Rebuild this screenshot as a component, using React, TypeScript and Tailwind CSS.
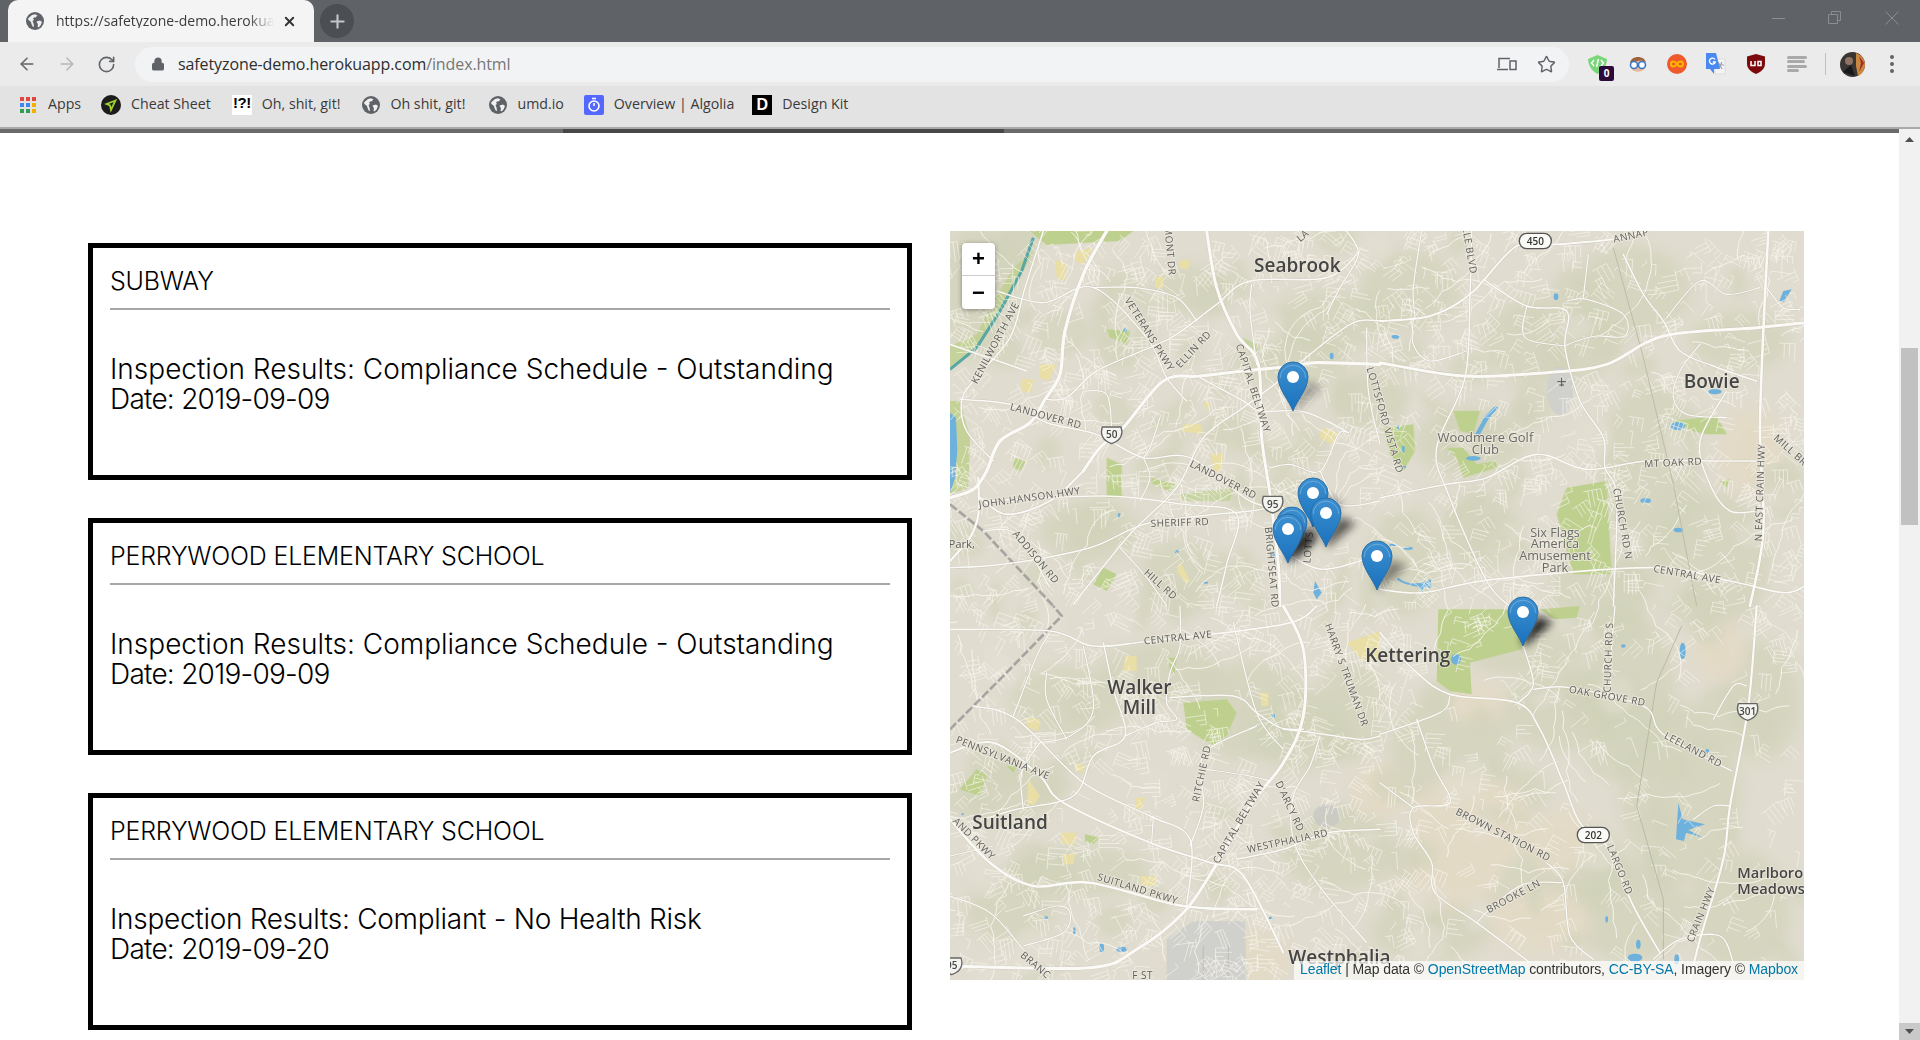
import React from 'react';
import { ArrowLeft, ArrowRight, RotateCw, Lock, Star, X, Plus } from 'lucide-react';

// map is drawn from four traced quadrants, coords are 3x crop coords
const QUADS: [number, number][] = [[0, 0], [430, 0], [0, 375], [430, 375]];

type Road = { q: number; w: number; p: number[] };

const ROADS: Road[] = [
  // top left
  { q: 0, w: 1.5, p: [0, 340, 130, 385, 230, 420] },
  { q: 0, w: 1.5, p: [280, 0, 225, 170, 180, 320, 70, 450, 35, 510, 50, 600, 130, 690] },
  { q: 0, w: 1.4, p: [140, 180, 280, 215, 430, 170, 590, 320, 650, 440, 710, 510] },
  { q: 0, w: 1.4, p: [430, 170, 560, 170, 680, 200, 740, 270] },
  { q: 0, w: 1.5, p: [1230, 60, 1130, 140, 900, 150, 800, 220, 680, 310, 600, 350, 440, 420, 350, 500, 290, 505] },
  { q: 0, w: 1.5, p: [1290, 270, 1210, 275, 1080, 370, 1000, 440, 880, 530, 760, 620, 680, 770, 540, 910, 370, 1120] },
  { q: 0, w: 1.5, p: [750, 440, 880, 510, 930, 540, 1050, 540, 1130, 570, 1195, 605] },
  { q: 0, w: 1.3, p: [1195, 605, 1165, 610, 1110, 720, 1020, 700, 960, 710] },
  { q: 0, w: 1.3, p: [1110, 720, 1170, 820, 1290, 810] },
  { q: 0, w: 1.5, p: [0, 1010, 160, 1000, 420, 950, 600, 875, 900, 840, 950, 830] },
  { q: 0, w: 1.3, p: [100, 900, 200, 910, 300, 1070] },
  { q: 0, w: 1.3, p: [920, 400, 900, 240, 905, 160] },
  { q: 0, w: 1.3, p: [1130, 250, 1170, 170, 1225, 70, 1190, 0] },
  { q: 0, w: 1.5, p: [100, 810, 460, 795, 700, 820, 860, 850, 830, 1000, 800, 1125] },
  { q: 0, w: 1.3, p: [1250, 290, 1255, 480, 1290, 640] },
  { q: 0, w: 1.5, p: [1000, 960, 1120, 1015, 1290, 970] },
  { q: 0, w: 1.2, p: [580, 680, 600, 740, 570, 810] },
  { q: 0, w: 1.2, p: [630, 560, 600, 650, 580, 680] },
  { q: 0, w: 1.2, p: [400, 480, 470, 490, 485, 590] },
  { q: 0, w: 1.2, p: [510, 950, 590, 1040, 650, 1125] },
  { q: 0, w: 1.5, p: [30, 505, 180, 520, 290, 575, 440, 610, 580, 680, 720, 680, 900, 810, 1000, 830] },
  { q: 0, w: 3.4, p: [470, 0, 400, 130, 345, 300, 330, 430, 285, 505, 240, 575, 150, 630, 110, 720, 70, 775, 0, 800] },
  { q: 0, w: 2, p: [400, 720, 300, 810, 170, 850, 90, 800] },
  { q: 0, w: 2.2, p: [85, 740, 85, 850, 60, 920, 0, 990] },
  { q: 0, w: 3.2, p: [1290, 400, 1100, 395, 1030, 405, 880, 420, 750, 435, 640, 450, 520, 590, 450, 650, 400, 720] },
  { q: 0, w: 3, p: [770, 0, 800, 170, 860, 310, 925, 400, 935, 620, 960, 790, 985, 1000, 990, 1125] },
  // top right
  { q: 1, w: 2, p: [0, 270, 150, 255, 270, 190, 410, 45, 530, 40, 700, 25, 800, 0] },
  { q: 1, w: 1.5, p: [275, 0, 270, 190, 255, 440, 170, 650, 205, 790, 320, 1050, 390, 1125] },
  { q: 1, w: 1.5, p: [310, 145, 440, 225, 560, 240, 555, 350, 600, 510, 670, 620, 675, 710, 710, 800, 700, 1125] },
  { q: 1, w: 1.6, p: [0, 800, 200, 760, 320, 740, 470, 670, 620, 715, 800, 690, 1020, 690, 1130, 690] },
  { q: 1, w: 1.5, p: [730, 70, 790, 190, 850, 270, 900, 360, 1000, 405, 1130, 450] },
  { q: 1, w: 1.7, p: [0, 1075, 130, 1085, 340, 1045, 820, 1010, 1050, 1050, 1210, 1085, 1275, 1065] },
  { q: 1, w: 1.5, p: [1040, 480, 960, 630, 990, 760, 1050, 840, 1130, 840] },
  { q: 1, w: 1.2, p: [560, 210, 620, 205, 730, 250, 735, 315, 650, 315, 590, 330, 555, 345] },
  { q: 1, w: 1.2, p: [440, 225, 435, 320, 555, 345] },
  { q: 1, w: 1.2, p: [100, 260, 100, 340, 150, 390, 260, 360] },
  { q: 1, w: 1.2, p: [860, 260, 960, 150, 1040, 190, 1140, 170] },
  { q: 1, w: 1.2, p: [960, 340, 900, 420, 880, 500, 920, 550, 1040, 560] },
  { q: 1, w: 1.2, p: [125, 0, 100, 170, 105, 260] },
  { q: 1, w: 1.2, p: [625, 70, 610, 200] },
  { q: 1, w: 1.2, p: [1160, 170, 1210, 230, 1260, 235] },
  { q: 1, w: 3, p: [0, 395, 250, 435, 500, 425, 680, 400, 850, 315, 1130, 290, 1275, 275] },
  { q: 1, w: 2.6, p: [1165, 0, 1150, 300, 1140, 600, 1150, 900, 1110, 1125] },
  // bottom left
  { q: 2, w: 1.7, p: [0, 70, 300, 75, 430, 120, 600, 105, 1000, 55, 1100, 0] },
  { q: 2, w: 1.5, p: [1000, 370, 1090, 380, 1230, 400, 1290, 390] },
  { q: 2, w: 1.5, p: [660, 275, 850, 270, 920, 320, 990, 365, 1060, 370] },
  { q: 2, w: 1.3, p: [850, 50, 920, 320, 1000, 430] },
  { q: 2, w: 1.5, p: [460, 110, 490, 250, 525, 390, 430, 450, 370, 570, 200, 610, 100, 640] },
  { q: 2, w: 1.5, p: [70, 300, 200, 340, 400, 530, 600, 630, 720, 700, 710, 900] },
  { q: 2, w: 1.4, p: [920, 360, 790, 420, 750, 480, 760, 600, 720, 720] },
  { q: 2, w: 1.2, p: [770, 490, 900, 510, 960, 525] },
  { q: 2, w: 1.3, p: [690, 0, 690, 120, 660, 200, 650, 290, 680, 340, 620, 350, 525, 390] },
  { q: 2, w: 1.5, p: [860, 760, 1000, 730, 1130, 680, 1290, 670] },
  { q: 2, w: 1.3, p: [1110, 390, 1080, 480, 1030, 570, 1030, 700, 1100, 830, 1250, 1010] },
  { q: 2, w: 1.3, p: [270, 410, 215, 500, 220, 610] },
  { q: 2, w: 1.2, p: [300, 80, 260, 150, 190, 330] },
  { q: 2, w: 1.2, p: [400, 120, 430, 310, 360, 390, 270, 410] },
  { q: 2, w: 1.2, p: [0, 870, 120, 920, 220, 1030, 300, 1125] },
  { q: 2, w: 1.2, p: [290, 200, 290, 280, 350, 400] },
  { q: 2, w: 1.2, p: [220, 930, 320, 900, 360, 920, 340, 980, 220, 1020] },
  { q: 2, w: 1.2, p: [0, 750, 130, 720] },
  { q: 2, w: 1.2, p: [610, 630, 605, 710] },
  { q: 2, w: 2, p: [0, 440, 130, 410, 270, 510, 340, 590, 600, 710, 780, 770, 880, 810, 1000, 1040] },
  { q: 2, w: 2.6, p: [0, 640, 120, 770, 250, 840, 420, 830, 700, 900, 920, 910] },
  { q: 2, w: 3, p: [1000, 0, 1060, 130, 1060, 330, 1000, 470, 900, 600, 790, 790, 700, 920, 560, 1030, 420, 1085, 0, 1080] },
  // bottom right
  { q: 3, w: 1.7, p: [0, 80, 100, 190, 210, 265, 410, 290, 480, 370, 550, 530, 600, 650, 680, 720, 760, 900, 840, 1040] },
  { q: 3, w: 1.4, p: [430, 120, 460, 235, 415, 290] },
  { q: 3, w: 1.4, p: [460, 250, 570, 245, 790, 300, 850, 385, 1055, 495] },
  { q: 3, w: 1.3, p: [705, 0, 695, 120, 690, 270] },
  { q: 3, w: 1.4, p: [110, 340, 160, 480, 210, 590, 100, 605, 100, 680, 155, 770, 165, 860, 290, 950, 450, 1070] },
  { q: 3, w: 1.3, p: [0, 530, 100, 605] },
  { q: 3, w: 1.3, p: [210, 270, 180, 320, 0, 385] },
  { q: 3, w: 1.4, p: [500, 770, 550, 830, 570, 990, 640, 1060] },
  { q: 3, w: 1.3, p: [290, 950, 340, 900, 430, 835, 545, 830] },
  { q: 3, w: 1.3, p: [820, 1060, 900, 1000, 1020, 990, 1060, 1070] },
  { q: 3, w: 1.2, p: [940, 640, 1000, 600, 1050, 600] },
  { q: 3, w: 1.2, p: [1000, 340, 1060, 240, 1100, 240] },
  { q: 3, w: 2.2, p: [1130, 0, 1105, 300, 1050, 600, 1030, 760, 960, 1000, 930, 1125] },
];

type Label = { q: number; t: string; x: number; y: number; r?: number; s?: number; c?: string; a?: 'start' | 'middle' | 'end'; b?: boolean };

const STREET = '#5c5c58';
const PLACE = '#454545';
const POI = '#6a6a66';

const LABELS: Label[] = [
  { q: 0, t: 'KENILWORTH AVE', x: 145, y: 340, r: -62 },
  { q: 0, t: 'LANDOVER RD', x: 285, y: 565, r: 15 },
  { q: 0, t: 'VETERANS PKWY', x: 590, y: 315, r: 58 },
  { q: 0, t: 'ELLIN RD', x: 738, y: 362, r: -47 },
  { q: 0, t: 'CAPITAL BELTWAY', x: 900, y: 475, r: 72 },
  { q: 0, t: 'LOTTSFORD VISTA RD', x: 1295, y: 570, r: 74 },
  { q: 0, t: 'JOHN.HANSON.HWY', x: 240, y: 810, r: -8 },
  { q: 0, t: 'LANDOVER RD', x: 815, y: 755, r: 27 },
  { q: 0, t: 'SHERIFF RD', x: 690, y: 885, r: -2 },
  { q: 0, t: 'ADDISON RD', x: 250, y: 985, r: 50 },
  { q: 0, t: 'HILL RD', x: 625, y: 1068, r: 42 },
  { q: 0, t: 'BRIGHTSEAT RD', x: 955, y: 1010, r: 85 },
  { q: 0, t: 'LOTTS', x: 1085, y: 950, r: -85 },
  { q: 0, t: 'MONT DR', x: 650, y: 60, r: 85 },
  { q: 0, t: 'LA', x: 1065, y: 22, r: -40 },
  { q: 0, t: 'Park,', x: 75, y: 950, s: 34, a: 'end' },
  { q: 0, t: 'Seabrook', x: 1042, y: 122, s: 57, c: PLACE, b: true },
  { q: 1, t: 'ANNAP', x: 755, y: 24, r: -12 },
  { q: 1, t: 'ILLE BLVD', x: 258, y: 55, r: 80 },
  { q: 1, t: 'Bowie', x: 995, y: 470, s: 57, c: PLACE, b: true },
  { q: 1, t: 'Woodmere Golf', x: 316, y: 632, s: 39, c: POI },
  { q: 1, t: 'Club', x: 316, y: 669, s: 39, c: POI },
  { q: 1, t: 'MT OAK RD', x: 880, y: 705, r: -3 },
  { q: 1, t: 'Six Flags', x: 525, y: 917, s: 38, c: POI },
  { q: 1, t: 'America', x: 525, y: 952, s: 38, c: POI },
  { q: 1, t: 'Amusement', x: 525, y: 988, s: 38, c: POI },
  { q: 1, t: 'Park', x: 525, y: 1024, s: 38, c: POI },
  { q: 1, t: 'CHURCH RD N', x: 718, y: 880, r: 80 },
  { q: 1, t: 'N EAST CRAIN HWY', x: 1150, y: 785, r: -88 },
  { q: 1, t: 'MILL BR', x: 1225, y: 665, r: 42 },
  { q: 1, t: 'CENTRAL AVE', x: 920, y: 1040, r: 10 },
  { q: 2, t: 'CENTRAL AVE', x: 685, y: 105, r: -6 },
  { q: 2, t: 'Walker', x: 568, y: 264, s: 57, c: PLACE, b: true },
  { q: 2, t: 'Mill', x: 568, y: 324, s: 57, c: PLACE, b: true },
  { q: 2, t: 'HARRY S TRUMAN DR', x: 1180, y: 210, r: 70 },
  { q: 2, t: 'PENNSYLVANIA AVE', x: 155, y: 465, r: 22 },
  { q: 2, t: 'RITCHIE RD', x: 765, y: 505, r: -78 },
  { q: 2, t: 'CAPITAL BELTWAY', x: 875, y: 655, r: -60 },
  { q: 2, t: "D'ARCY RD", x: 1010, y: 605, r: 65 },
  { q: 2, t: 'WESTPHALIA RD', x: 1015, y: 715, r: -12 },
  { q: 2, t: 'Suitland', x: 180, y: 668, s: 57, c: PLACE, b: true },
  { q: 2, t: 'AND PKWY', x: 65, y: 705, r: 45 },
  { q: 2, t: 'SUITLAND PKWY', x: 560, y: 858, r: 17 },
  { q: 2, t: 'BRANC', x: 250, y: 1085, r: 40 },
  { q: 2, t: 'F ST', x: 578, y: 1120 },
  { q: 2, t: 'Westphalia', x: 1015, y: 1075, s: 57, c: PLACE, b: true, a: 'start' },
  { q: 3, t: 'Kettering', x: 211, y: 168, s: 57, c: PLACE, b: true, a: 'end' },
  { q: 3, t: 'OAK GROVE RD', x: 680, y: 280, r: 10 },
  { q: 3, t: 'CHURCH RD S', x: 695, y: 155, r: -88 },
  { q: 3, t: 'LEELAND RD', x: 935, y: 440, r: 28 },
  { q: 3, t: 'BROWN STATION RD', x: 365, y: 695, r: 27 },
  { q: 3, t: 'LARGO RD', x: 710, y: 795, r: 68 },
  { q: 3, t: 'BROOKE LN', x: 405, y: 880, r: -28 },
  { q: 3, t: 'CRAIN HWY', x: 972, y: 930, r: -68 },
  { q: 3, t: 'Marlboro', x: 1072, y: 815, s: 44, c: PLACE, b: true, a: 'start' },
  { q: 3, t: 'Meadows', x: 1072, y: 863, s: 44, c: PLACE, b: true, a: 'start' },
];

// forest / clearing blobs in map px: cx, cy, rx, ry
const GREENS = [
  [30, 60, 40, 70], [140, 300, 50, 30], [240, 60, 40, 25], [380, 90, 60, 30], [340, 130, 60, 25], [335, 215, 45, 20],
  [460, 60, 50, 40], [520, 210, 55, 35], [600, 110, 70, 45], [680, 60, 60, 45], [700, 240, 50, 90], [760, 330, 60, 70],
  [650, 360, 50, 40], [455, 330, 35, 55], [530, 300, 40, 40], [230, 340, 40, 30], [210, 440, 60, 30], [300, 480, 60, 50],
  [120, 470, 60, 35], [60, 560, 50, 30], [130, 640, 70, 25], [60, 680, 45, 30], [350, 500, 50, 40], [390, 620, 60, 40],
  [500, 520, 60, 60], [620, 480, 70, 40], [680, 460, 45, 80], [730, 560, 60, 90], [600, 640, 80, 50], [680, 680, 60, 50],
  [790, 680, 50, 60], [810, 470, 40, 60], [480, 700, 60, 30], [170, 90, 30, 50], [280, 200, 30, 20], [400, 480, 35, 50],
  [790, 110, 50, 30], [420, 170, 40, 30], [575, 420, 60, 25], [560, 560, 40, 25],
];
const BEIGE = [
  [520, 595, 60, 50], [500, 645, 50, 30], [430, 560, 30, 25], [590, 690, 50, 30], [800, 220, 30, 40], [525, 470, 30, 20],
  [610, 610, 30, 30], [770, 420, 25, 30], [280, 730, 60, 30],
];

const mulberry = (seed: number) => () => {
  seed = (seed * 1664525 + 1013904223) >>> 0;
  return seed / 4294967296;
};

// little residential street clusters
const buildStreets = () => {
  const rnd = mulberry(17);
  let d = '';
  for (let i = 0; i < 2300; i++) {
    const x = rnd() * 854;
    const y = rnd() * 749;
    // rural bits in the south east are sparse
    if (x > 470 && y > 420 && rnd() < 0.7) continue;
    const a = rnd() * Math.PI;
    const n = 1 + Math.floor(rnd() * 4);
    const gap = 3 + rnd() * 2.5;
    const ca = Math.cos(a);
    const sa = Math.sin(a);
    for (let k = 0; k < n; k++) {
      const len = 5 + rnd() * 16;
      const ox = x - sa * gap * k;
      const oy = y + ca * gap * k;
      d += `M${ox.toFixed(1)} ${oy.toFixed(1)}L${(ox + ca * len).toFixed(1)} ${(oy + sa * len).toFixed(1)}`;
    }
    d += `M${x.toFixed(1)} ${y.toFixed(1)}L${(x - sa * gap * n).toFixed(1)} ${(y + ca * gap * n).toFixed(1)}`;
  }
  return d;
};
const STREET_PATH = buildStreets();

// collector roads that wander between the traced ones
const buildCollectors = () => {
  const rnd = mulberry(91);
  let d = '';
  for (let i = 0; i < 170; i++) {
    let x = rnd() * 854;
    let y = rnd() * 749;
    let a = rnd() * Math.PI * 2;
    d += `M${x.toFixed(1)} ${y.toFixed(1)}`;
    const steps = 3 + Math.floor(rnd() * 4);
    for (let k = 0; k < steps; k++) {
      a += (rnd() - 0.5) * 1.1;
      const len = 10 + rnd() * 16;
      const cx = x + Math.cos(a) * len * 0.5;
      const cy = y + Math.sin(a) * len * 0.5;
      x += Math.cos(a + 0.3) * len;
      y += Math.sin(a + 0.3) * len;
      d += `Q${cx.toFixed(1)} ${cy.toFixed(1)} ${x.toFixed(1)} ${y.toFixed(1)}`;
    }
  }
  return d;
};
const COLLECTOR_PATH = buildCollectors();

// small mottled forest spots
const buildSpots = () => {
  const rnd = mulberry(5);
  const out: number[][] = [];
  for (let i = 0; i < 170; i++) {
    out.push([rnd() * 854, rnd() * 749, 8 + rnd() * 22, 6 + rnd() * 16, rnd() * 180]);
  }
  return out;
};
const SPOTS = buildSpots();

const smooth = (p: number[]) => {
  const pts: [number, number][] = [];
  for (let i = 0; i < p.length; i += 2) pts.push([p[i], p[i + 1]]);
  let d = `M${pts[0][0]} ${pts[0][1]}`;
  for (let i = 0; i < pts.length - 1; i++) {
    const a = pts[Math.max(0, i - 1)];
    const b = pts[i];
    const c = pts[i + 1];
    const e = pts[Math.min(pts.length - 1, i + 2)];
    const k = 6;
    d += `C${(b[0] + (c[0] - a[0]) / k).toFixed(1)} ${(b[1] + (c[1] - a[1]) / k).toFixed(1)} ${(c[0] - (e[0] - b[0]) / k).toFixed(1)} ${(c[1] - (e[1] - b[1]) / k).toFixed(1)} ${c[0]} ${c[1]}`;
  }
  return d;
};

const quad = (q: number) => `translate(${QUADS[q][0]} ${QUADS[q][1]}) scale(${1 / 3})`;

const Pin = ({ x, y, shadow }: { x: number; y: number; shadow: number }) => (
  <g transform={`translate(${x} ${y})`}>
    <path d="M2 0 L30 -24 L14 -30 L-2 -6 Z" fill="#111" opacity={shadow} filter="url(#pinShadow)" />
    <path
      d="M0 0 C-3 -9 -15 -22 -15 -34 A15 15 0 1 1 15 -34 C15 -22 3 -9 0 0 Z"
      fill="url(#pinFill)"
      stroke="#2a6ea6"
      strokeWidth="1"
    />
    <path d="M-12.8 -33 A12.8 12.8 0 0 1 12.8 -33" fill="none" stroke="#7fb6e0" strokeWidth="1" opacity="0.7" />
    <circle cx="0" cy="-34" r="6" fill="#fff" />
  </g>
);

const Shield = ({ x, y, t }: { x: number; y: number; t: string }) => (
  <g transform={`translate(${x} ${y})`}>
    <path d="M-28 -24 H28 C34 -8 32 16 0 26 C-32 16 -34 -8 -28 -24 Z" fill="#f4f4f0" stroke="#666" strokeWidth="4" />
    <text textAnchor="middle" y="10" fontSize="30" fontWeight="600" fill="#444" className="font-['Open_Sans',sans-serif]">
      {t}
    </text>
  </g>
);

const OvalShield = ({ x, y, t }: { x: number; y: number; t: string }) => (
  <g transform={`translate(${x} ${y})`}>
    <rect x="-48" y="-23" width="96" height="46" rx="22" fill="#fafaf6" stroke="#555" strokeWidth="4" />
    <text textAnchor="middle" y="11" fontSize="30" fontWeight="600" fill="#333" className="font-['Open_Sans',sans-serif]">
      {t}
    </text>
  </g>
);

const MapCanvas = () => (
  <svg viewBox="0 0 854 749" width="854" height="749" className="block blur-[0.35px]">
    <defs>
      <filter id="soft" x="-30%" y="-30%" width="160%" height="160%">
        <feGaussianBlur stdDeviation="7" />
      </filter>
      <filter id="softer" x="-10%" y="-10%" width="120%" height="120%">
        <feGaussianBlur stdDeviation="3.5" />
      </filter>
      <filter id="pinShadow" x="-50%" y="-50%" width="200%" height="200%">
        <feGaussianBlur stdDeviation="4" />
      </filter>
      <linearGradient id="pinFill" x1="0" y1="0" x2="0" y2="1">
        <stop offset="0" stopColor="#3d90d0" />
        <stop offset="1" stopColor="#1a72bd" />
      </linearGradient>
    </defs>
    <rect width="854" height="749" fill="#e0dccf" />

    <g filter="url(#soft)">
      {GREENS.map((g, i) => (
        <ellipse key={i} cx={g[0]} cy={g[1]} rx={g[2]} ry={g[3]} fill="#cfd1b6" opacity="0.6" />
      ))}
      {BEIGE.map((g, i) => (
        <ellipse key={i} cx={g[0]} cy={g[1]} rx={g[2]} ry={g[3]} fill="#e3dac6" />
      ))}
    </g>
    <g filter="url(#softer)">
      {SPOTS.map((g, i) => (
        <ellipse
          key={i}
          cx={g[0]}
          cy={g[1]}
          rx={g[2]}
          ry={g[3]}
          transform={`rotate(${g[4]} ${g[0]} ${g[1]})`}
          fill={i % 3 === 0 ? '#e4dfd3' : '#cfd2b8'}
          opacity="0.5"
        />
      ))}
    </g>

    {/* parks */}
    <g fill="#bed08e">
      <g transform={quad(0)}>
        <path d="M240 0H550L510 30L290 42Z" />
        <path d="M250 60L215 130L150 250L60 370L0 410V345L80 310L130 210L190 110Z" opacity="0.8" />
        <path d="M0 510H30L60 620L55 770L0 790Z" opacity="0.85" />
        <path d="M470 680L515 700L515 800H470Z" />
        <path d="M470 295L540 300L530 340L480 320Z" />
        <path d="M190 680L230 690L210 720L190 710Z" />
        <path d="M600 740L680 760L660 780L610 760Z" />
        <path d="M690 790L850 770L840 810L700 810Z" opacity="0.7" />
        <path d="M880 320L920 340L925 360L890 350Z" opacity="0.7" />
        <path d="M460 1010L500 1030L470 1080L430 1060Z" />
      </g>
      <g transform={quad(1)}>
        <path d="M220 540L300 540L280 610L240 600Z" />
        <path d="M200 650L250 650L290 700L350 690L350 710L250 740L230 680Z" />
        <path d="M10 590L100 580L105 660L70 720L30 670Z" />
        <path d="M560 770L680 750L695 1030L580 1030L530 850Z" />
        <path d="M880 570L1010 555L1040 610L980 610L940 600Z" />
        <path d="M1020 750L1050 745L1040 770Z" />
      </g>
      <g transform={quad(2)}>
        <path d="M700 290L830 280L860 320L830 390L790 420L710 370Z" />
        <path d="M30 550L80 490L110 510L90 570Z" />
        <path d="M170 480L200 480L190 500Z" />
        <path d="M405 685L450 695L430 715L405 705Z" />
        <path d="M655 155L680 155L675 200L660 200Z" />
      </g>
      <g transform={quad(3)}>
        <path d="M175 10L420 10L425 130L270 170L275 265L210 255L170 225Z" />
        <path d="M480 10L600 0L590 35L520 40Z" />
      </g>
    </g>

    {/* yellow-ish land use */}
    <g fill="#e8dea6">
      <g transform={quad(0)}>
        <path d="M380 60L430 50L400 100L375 90Z" />
        <path d="M315 85L350 100L345 150L320 140Z" />
        <path d="M270 400L320 400L295 450L270 440Z" />
        <path d="M215 445L250 445L245 485L215 480Z" />
        <path d="M785 670L820 665L815 720L790 720Z" />
        <path d="M700 580L755 580L755 610L695 600Z" />
        <path d="M1115 590L1165 605L1145 640L1110 620Z" />
        <path d="M760 510L785 520L770 540Z" />
        <path d="M615 140L640 135L640 170L615 170Z" />
        <path d="M690 90L720 85L715 115L690 110Z" />
        <path d="M690 990L720 1050L710 1060L680 1020Z" />
      </g>
      <g transform={quad(2)}>
        <path d="M525 150L560 150L560 195L520 195Z" />
        <path d="M235 520L270 570L250 600L232 590Z" />
        <path d="M225 335L270 340L265 375L235 365Z" />
        <path d="M335 680L380 680L370 720L335 710Z" />
        <path d="M340 745L375 745L370 775L340 775Z" />
        <path d="M555 575L585 575L575 610L555 610Z" />
        <path d="M570 810L615 810L620 840L575 840Z" />
        <path d="M375 470L405 480L400 500L375 495Z" />
        <path d="M1190 110L1290 75V160L1240 165Z" />
        <path d="M930 260L955 260L955 300L935 300Z" />
      </g>
    </g>

    {/* airfield and small airstrip */}
    <g transform={quad(2)}>
      <path d="M650 1125V1000L730 945H885L890 1125Z" fill="#d0d0cc" />
      <path d="M760 1020V1125M835 1020V1125" stroke="#c0c0bc" strokeWidth="4" />
      <ellipse cx="1130" cy="630" rx="40" ry="35" fill="#c8c8c4" opacity="0.8" />
    </g>
    <ellipse cx="610" cy="160" rx="13" ry="24" fill="#d0d0cc" />

    {/* water */}
    <g fill="#6fb1dd">
      <g transform={quad(0)}>
        <path d="M0 545L18 560L22 660L15 740L0 785Z" />
        <path d="M1095 1050L1115 1085L1100 1105L1090 1085Z" />
        <ellipse cx="1145" cy="375" rx="6" ry="10" />
        <ellipse cx="525" cy="298" rx="5" ry="6" />
        <ellipse cx="507" cy="853" rx="4" ry="7" />
        <ellipse cx="680" cy="962" rx="6" ry="5" />
        <ellipse cx="768" cy="1055" rx="7" ry="3" />
        <ellipse cx="970" cy="970" rx="5" ry="10" />
      </g>
      <g transform={quad(1)}>
        <path d="M345 525L315 555L285 610L300 610L325 565L355 530Z" />
        <ellipse cx="280" cy="682" rx="22" ry="7" />
        <ellipse cx="893" cy="585" rx="22" ry="12" />
        <path d="M1235 175L1210 180L1198 210L1212 212Z" />
        <ellipse cx="528" cy="197" rx="7" ry="10" />
        <ellipse cx="47" cy="317" rx="12" ry="6" />
        <ellipse cx="797" cy="809" rx="16" ry="7" />
        <ellipse cx="895" cy="897" rx="14" ry="7" />
        <ellipse cx="1005" cy="482" rx="20" ry="8" />
        <ellipse cx="70" cy="655" rx="4" ry="12" />
        <ellipse cx="55" cy="590" rx="4" ry="7" />
        <ellipse cx="72" cy="708" rx="6" ry="4" />
        <ellipse cx="85" cy="952" rx="14" ry="5" />
        <ellipse cx="40" cy="942" rx="12" ry="4" />
        <path d="M55 1040C80 1062 120 1062 152 1045L155 1070L130 1068L128 1085L118 1068C90 1065 60 1055 50 1045Z" />
      </g>
      <g transform={quad(2)}>
        <ellipse cx="970" cy="330" rx="5" ry="6" />
        <ellipse cx="455" cy="1025" rx="7" ry="14" />
        <ellipse cx="515" cy="1030" rx="17" ry="8" />
        <ellipse cx="373" cy="975" rx="4" ry="11" />
        <ellipse cx="288" cy="935" rx="6" ry="4" />
        <ellipse cx="962" cy="936" rx="6" ry="4" />
        <ellipse cx="38" cy="625" rx="4" ry="3" />
      </g>
      <g transform={quad(3)}>
        <path d="M895 590L908 640L975 655L925 672L970 695L918 680L912 705L888 700Z" />
        <ellipse cx="908" cy="135" rx="9" ry="25" />
        <ellipse cx="228" cy="160" rx="15" ry="16" />
        <ellipse cx="730" cy="120" rx="7" ry="5" />
        <ellipse cx="982" cy="435" rx="6" ry="6" />
        <ellipse cx="680" cy="940" rx="4" ry="10" />
        <ellipse cx="775" cy="1015" rx="7" ry="14" />
        <ellipse cx="765" cy="1055" rx="22" ry="12" />
        <ellipse cx="890" cy="1060" rx="7" ry="16" />
      </g>
    </g>
    <path transform={quad(0)} d="M250 20L215 120L150 240L80 350L0 415" fill="none" stroke="#58a7a4" strokeWidth="9" />

    <path d={STREET_PATH} fill="none" stroke="#f8f6ef" strokeWidth="0.8" opacity="0.78" />
    <path d={COLLECTOR_PATH} fill="none" stroke="#f8f6ef" strokeWidth="1" opacity="0.9" />

    {/* rail + old rail line */}
    <g fill="none" stroke="#9b9b98" strokeWidth="8" strokeDasharray="26 8" opacity="0.85">
      <path transform={quad(0)} d="M0 820L100 900L310 1125" />
      <path transform={quad(2)} d="M0 370L150 220L335 30L310 0" />
    </g>
    <path transform={quad(3)} d="M905 60L830 230L770 600L850 880L850 1060" fill="none" stroke="#b9b9a6" strokeWidth="3" />
    <path transform={quad(1)} d="M700 50L790 380L880 760L950 1125" fill="none" stroke="#bcbca9" strokeWidth="3" />

    {ROADS.map((r, i) => (
      <path key={`c${i}`} transform={quad(r.q)} d={smooth(r.p)} fill="none" stroke="#bdb9ab" strokeWidth={(r.w + 0.7) * 3} strokeLinecap="round" strokeLinejoin="round" opacity="0.6" />
    ))}
    {ROADS.map((r, i) => (
      <path key={`r${i}`} transform={quad(r.q)} d={smooth(r.p)} fill="none" stroke="#fbfaf6" strokeWidth={r.w * 3} strokeLinecap="round" strokeLinejoin="round" />
    ))}

    <g transform={quad(1)}>
      <path d="M545 440V466M532 452H558M538 462H552" stroke="#555" strokeWidth="3" fill="none" />
    </g>

    {LABELS.map((l, i) => {
      const size = l.s ?? 30;
      return (
        <g key={i} transform={quad(l.q)}>
          <text
            transform={`translate(${l.x} ${l.y}) rotate(${l.r ?? 0})`}
            textAnchor={l.a ?? 'middle'}
            fontSize={size}
            fontWeight={l.b ? 600 : 400}
            fill={l.c ?? STREET}
            stroke="#ebe8dd"
            strokeWidth={size > 40 ? 5 : 6}
            strokeOpacity="0.85"
            paintOrder="stroke"
            letterSpacing={l.s ? 0 : 1.5}
            className="font-['Open_Sans',sans-serif]"
          >
            {l.t}
          </text>
        </g>
      );
    })}

    <g transform={quad(0)}>
      <Shield x={485} y={612} t="50" />
      <Shield x={968} y={820} t="95" />
    </g>
    <g transform={quad(1)}>
      <OvalShield x={466} y={30} t="450" />
    </g>
    <g transform={quad(2)}>
      <Shield x={5} y={1080} t="95" />
    </g>
    <g transform={quad(3)}>
      <Shield x={1103} y={317} t="301" />
      <OvalShield x={640} y={687} t="202" />
    </g>

    <Pin x={343} y={180} shadow={0.3} />
    <Pin x={363} y={296} shadow={0.5} />
    <Pin x={342} y={325} shadow={0.6} />
    <Pin x={338} y={332} shadow={0.75} />
    <Pin x={376} y={316} shadow={0.65} />
    <Pin x={427} y={359} shadow={0.45} />
    <Pin x={573} y={415} shadow={0.9} />
  </svg>
);

const Globe = ({ size = 18 }: { size?: number }) => (
  <svg width={size} height={size} viewBox="0 0 18 18" className="shrink-0">
    <circle cx="9" cy="9" r="9" fill="#5f6368" />
    <path d="M2 6.5L6 3L9 2.2L11.5 3.5L9.5 5.5L8.5 5.2L7 6.5L8 8L6.5 9L7.5 11.5L8 14.5L7 15L5.5 12L5 10L2.5 8Z" fill="#f0f0f0" />
    <path d="M10.5 9.5L14 8.5L16 10L14.5 13.5L12.5 15.5L11.5 14.5L12 12.5Z" fill="#f0f0f0" />
  </svg>
);

const Bookmark = ({ icon, label, className, gap = 'ml-[10px]' }: { icon: React.ReactNode; label: string; className: string; gap?: string }) => (
  <div className={`flex items-center ${className}`}>
    {icon}
    <span className={`${gap} text-[14.2px] leading-none text-[#3a3a3a]`}>{label}</span>
  </div>
);

const AppsIcon = () => {
  const colors = ['#e0483e', '#e0483e', '#e0483e', '#3f86ee', '#3f86ee', '#f2b100', '#2f9e52', '#2f9e52', '#f2b100'];
  return (
    <div className="grid h-[16px] w-[16px] grid-cols-3 gap-[2px]">
      {colors.map((c, i) => (
        <svg key={i} viewBox="0 0 4 4" className="h-[4px] w-[4px]">
          <rect width="4" height="4" fill={c} />
        </svg>
      ))}
    </div>
  );
};

const Toolbar = () => (
  <div className="flex h-[44px] items-center bg-[#ebebeb]">
    <ArrowLeft size={20} strokeWidth={1.8} color="#606367" className="ml-[17px]" />
    <ArrowRight size={20} strokeWidth={1.8} color="#b5b6b7" className="ml-[20px]" />
    <RotateCw size={19} strokeWidth={2} color="#606367" className="ml-[20px]" />
    <div className="ml-[19px] flex h-[35px] w-[1434px] items-center rounded-full bg-[#f2f3f4]">
      <Lock size={14} strokeWidth={2.6} color="#5f6368" fill="#5f6368" className="ml-[16px]" />
      <span className="ml-[13px] text-[16px] leading-none tracking-[-0.1px] text-[#2e2e2e]">
        safetyzone-demo.herokuapp.com<span className="text-[#777]">/index.html</span>
      </span>
      <svg width="20" height="14" viewBox="0 0 20 14" className="ml-auto" fill="none" stroke="#5f6368" strokeWidth="1.5">
        <path d="M2 11V1.5H13M0 12.5H11" />
        <rect x="13" y="4" width="6" height="8.5" />
      </svg>
      <Star size={19} strokeWidth={1.8} color="#5f6368" className="ml-[20px] mr-[13px]" />
    </div>
    <div className="relative ml-[18px] h-[21px] w-[21px]">
      <svg viewBox="0 0 21 21" className="h-[21px] w-[21px]">
        <path d="M1 5L10.500 1L20 5C20 12 15 18 10.500 20C6 18 1 12 1 5Z" fill="#7bd67b" />
        <path d="M7 6L4.500 9L7 12M14 6L16.500 9L14 12M11.500 5L9.500 13" stroke="#fff" strokeWidth="1.4" fill="none" />
      </svg>
      <span className="absolute left-[12px] top-[12px] flex h-[15px] w-[15px] items-center justify-center rounded-[2px] bg-[#2b0b3a] text-[10px] font-bold leading-none text-white">
        0
      </span>
    </div>
    <svg viewBox="0 0 20 20" className="ml-[20px] h-[20px] w-[20px]">
      <path d="M3 9C3 3 17 3 17 9V14C15 19 5 19 3 14Z" fill="#e9b79a" />
      <path d="M2 9C3 1 17 1 18 9C14 4 8 8 2 9Z" fill="#a0623a" />
      <circle cx="6" cy="11" r="3.500" fill="#fff" stroke="#3778c8" strokeWidth="1.6" />
      <circle cx="14" cy="11" r="3.500" fill="#fff" stroke="#3778c8" strokeWidth="1.6" />
    </svg>
    <svg viewBox="0 0 20 20" className="ml-[19px] h-[20px] w-[20px]">
      <circle cx="10" cy="10" r="10" fill="#ee5a2c" />
      <path d="M10 10C8 6.500 4 7 4 10C4 13 8 13.500 10 10C12 6.500 16 7 16 10C16 13 12 13.500 10 10Z" fill="none" stroke="#ffb400" strokeWidth="2" />
    </svg>
    <svg viewBox="0 0 20 22" className="ml-[19px] h-[22px] w-[20px]">
      <path d="M9 6H19V21H9Z" fill="#f4f4f4" stroke="#d0d0d0" strokeWidth="0.6" />
      <path d="M12 9L16 16M16 9L12 16M11 12H18" stroke="#9aa0a6" strokeWidth="1.200" />
      <path d="M0 0H10L14 16H8V21L4 16H0Z" fill="#4a8af0" />
      <path d="M9 6.500A3 3 0 1 0 9.300 9H6.800" fill="none" stroke="#fff" strokeWidth="1.300" />
    </svg>
    <svg viewBox="0 0 18 20" className="ml-[21px] h-[20px] w-[18px]">
      <path d="M9 0L18 2.500V10C18 15 13 18.500 9 20C5 18.500 0 15 0 10V2.500Z" fill="#7c0a0c" />
      <path d="M4 7V11.500H8V7M11 7.500H14V11.500H11Z" fill="none" stroke="#fff" strokeWidth="1.500" />
    </svg>
    <div className="ml-[22px] flex w-[20px] flex-col gap-[1.5px]">
      <span className="h-[3px] w-[20px] rounded-full bg-[#a9a9a9]" />
      <span className="h-[3px] w-[18px] rounded-full bg-[#a9a9a9]" />
      <span className="h-[3px] w-[20px] rounded-full bg-[#a9a9a9]" />
      <span className="h-[3px] w-[12px] rounded-full bg-[#a9a9a9]" />
    </div>
    <span className="ml-[18px] h-[22px] w-px bg-[#c0c0c0]" />
    <svg viewBox="0 0 25 25" className="ml-[14px] h-[25px] w-[25px]">
      <circle cx="12.500" cy="12.500" r="12.500" fill="#3a3532" />
      <path d="M16 1C22 3 25 8 25 13C25 18 22 22 18 24L16 14Z" fill="#c8883e" />
      <path d="M19 4L24 11L19 20L21 11Z" fill="#a32c2c" />
      <circle cx="9" cy="9" r="4" fill="#8f7464" />
      <path d="M3 20L11 13L15 24Z" fill="#16181c" />
    </svg>
    <div className="ml-[25px] flex flex-col gap-[3px]">
      <span className="h-[4px] w-[4px] rounded-full bg-[#5f6368]" />
      <span className="h-[4px] w-[4px] rounded-full bg-[#5f6368]" />
      <span className="h-[4px] w-[4px] rounded-full bg-[#5f6368]" />
    </div>
  </div>
);

const TabStrip = () => (
  <div className="flex h-[42px] items-end bg-[#5f6367]">
    <div className="ml-[8px] flex h-[42px] w-[306px] items-center rounded-t-[10px] bg-[#f4f4f4]">
      <span className="ml-[18px]">
        <Globe />
      </span>
      <span className="ml-[12px] w-[218px] overflow-hidden whitespace-nowrap text-[14px] leading-none text-[#3b3b3b] [mask-image:linear-gradient(to_right,black_88%,transparent)]">
        https://safetyzone-demo.herokuapp.com
      </span>
      <X size={15} strokeWidth={3} color="#333" className="ml-[8px]" />
    </div>
    <div className="mb-[4px] ml-[6px] flex h-[34px] w-[34px] items-center justify-center rounded-full bg-[#4b4f53]">
      <Plus size={21} strokeWidth={2.4} color="#c4c6c8" />
    </div>
    <div className="mb-[17px] ml-auto flex items-center">
      <span className="h-px w-[13px] bg-[#8a8e92]" />
      <svg width="13" height="13" viewBox="0 0 13 13" fill="none" stroke="#8a8e92" className="ml-[43px] mb-[1px]">
        <path d="M0.500 3.500H9.500V12.500H0.500ZM3.500 3.500V0.500H12.500V9.500H9.500" />
      </svg>
      <svg width="14" height="14" viewBox="0 0 14 14" stroke="#8a8e92" className="ml-[44px] mr-[21px]">
        <path d="M0.500 0.500L13.500 13.500M13.500 0.500L0.500 13.500" />
      </svg>
    </div>
  </div>
);

const BookmarkBar = () => (
  <div className="flex h-[43px] items-center border-b-2 border-[#a9a9a9] bg-[#e3e3e3] pb-[4px]">
    <Bookmark className="ml-[20px]" gap="ml-[12px]" icon={<AppsIcon />} label="Apps" />
    <Bookmark
      className="ml-[20px]"
      label="Cheat Sheet"
      icon={
        <svg width="20" height="20" viewBox="0 0 20 20">
          <circle cx="10" cy="10" r="10" fill="#1c1c1c" />
          <path d="M14.500 5.500L5.500 9L9 10.500L10 15Z" fill="none" stroke="#9fd12f" strokeWidth="1.800" />
        </svg>
      }
    />
    <Bookmark
      className="ml-[21px]"
      label="Oh, shit, git!"
      icon={
        <span className="flex h-[20px] w-[20px] flex-col items-center bg-white font-['Liberation_Sans',sans-serif] text-[15px] font-bold leading-[16px] tracking-[-0.5px] text-black">
          !?!
        </span>
      }
    />
    <Bookmark className="ml-[22px]" label="Oh shit, git!" icon={<Globe />} />
    <Bookmark className="ml-[24px]" label="umd.io" icon={<Globe />} />
    <Bookmark
      className="ml-[20px]"
      label="Overview | Algolia"
      icon={
        <svg width="20" height="20" viewBox="0 0 20 20">
          <rect width="20" height="20" rx="2" fill="#5468ff" />
          <circle cx="10" cy="11" r="5" fill="none" stroke="#fff" strokeWidth="1.600" />
          <path d="M10 11V8M8 3.500H12" stroke="#fff" strokeWidth="1.600" />
        </svg>
      }
    />
    <Bookmark
      className="ml-[18px]"
      label="Design Kit"
      icon={
        <span className="flex h-[20px] w-[20px] items-center justify-center bg-black font-['Liberation_Sans',sans-serif] text-[16px] font-bold leading-none text-white">
          D
        </span>
      }
    />
  </div>
);

const CARDS = [
  { name: 'SUBWAY', result: 'Compliance Schedule - Outstanding', date: '2019-09-09', fit: 'tracking-[0px]' },
  { name: 'PERRYWOOD ELEMENTARY SCHOOL', result: 'Compliance Schedule - Outstanding', date: '2019-09-09', fit: 'tracking-[0px]' },
  { name: 'PERRYWOOD ELEMENTARY SCHOOL', result: 'Compliant - No Health Risk', date: '2019-09-20', fit: 'tracking-[-0.28px]' },
];

const Card = ({ name, result, date, fit }: { name: string; result: string; date: string; fit: string }) => (
  <div className="h-[237px] border-[5px] border-black px-[17px] text-black">
    <div className="flex h-[62px] items-end border-b-2 border-[#a6a6a6] pb-[9px] text-[25px] font-light leading-[36px] tracking-[-0.2px]">
      {name}
    </div>
    <div className="mt-[44px] text-[28px] font-light leading-[30px]">
      <div className={fit}>Inspection Results: {result}</div>
      <div className="tracking-[-0.75px]">Date: {date}</div>
    </div>
  </div>
);

const Scrollbar = () => (
  <div className="flex w-[21px] shrink-0 flex-col bg-[#f1f1f1]">
    <div className="flex h-[19px] items-center justify-center pt-[2px]">
      <svg width="9" height="5" viewBox="0 0 9 5">
        <path d="M4.500 0L9 5H0Z" fill="#505050" />
      </svg>
    </div>
    <div className="mx-[2px] mt-[200px] h-[177px] bg-[#c1c1c1]" />
    <div className="mt-auto flex h-[17px] items-center justify-center bg-[#c9c9c9]">
      <svg width="9" height="5" viewBox="0 0 9 5">
        <path d="M4.500 5L9 0H0Z" fill="#505050" />
      </svg>
    </div>
  </div>
);

export default function App() {
  return (
    <div className="flex h-[1040px] w-[1920px] flex-col overflow-hidden bg-white font-['Open_Sans',sans-serif]">
      <TabStrip />
      <Toolbar />
      <BookmarkBar />
      <div className="flex min-h-0 flex-1">
        <div className="flex min-w-0 flex-1 flex-col">
          <div className="flex h-[4px] shrink-0">
            <div className="w-[563px] bg-[#6b6b6b]" />
            <div className="w-[441px] bg-[#474747]" />
            <div className="flex-1 bg-[#6b6b6b]" />
          </div>
          <div className="flex items-start pl-[88px] font-['Inter',sans-serif]">
            <div className="mt-[110px] flex w-[824px] shrink-0 flex-col gap-[38px]">
              {CARDS.map((c, i) => (
                <Card key={i} {...c} />
              ))}
            </div>
            <div className="relative ml-[38px] mt-[98px] h-[749px] w-[854px] shrink-0 overflow-hidden">
              <MapCanvas />
              <div className="absolute left-[12px] top-[12px] flex w-[33px] flex-col overflow-hidden rounded-[4px] bg-white shadow-[0_1px_5px_rgba(0,0,0,0.4)]">
                <div className="flex h-[33px] items-center justify-center border-b border-[#ccc] font-['Liberation_Sans',sans-serif] text-[22px] font-bold leading-none text-black">
                  +
                </div>
                <div className="flex h-[33px] items-center justify-center font-['Liberation_Sans',sans-serif] text-[22px] font-bold leading-none text-black">
                  −
                </div>
              </div>
              <div className="absolute bottom-0 right-0 flex h-[19px] items-center bg-white/70 px-[6px] pb-[3px] font-['Liberation_Sans',sans-serif] text-[14px] leading-none tracking-[-0.1px] text-[#333]">
                <span className="text-[#0078a8]">Leaflet</span>
                <span className="whitespace-pre"> | Map data © </span>
                <span className="text-[#0078a8]">OpenStreetMap</span>
                <span className="whitespace-pre"> contributors, </span>
                <span className="text-[#0078a8]">CC-BY-SA</span>
                <span className="whitespace-pre">, Imagery © </span>
                <span className="text-[#0078a8]">Mapbox</span>
              </div>
            </div>
          </div>
        </div>
        <Scrollbar />
      </div>
    </div>
  );
}
